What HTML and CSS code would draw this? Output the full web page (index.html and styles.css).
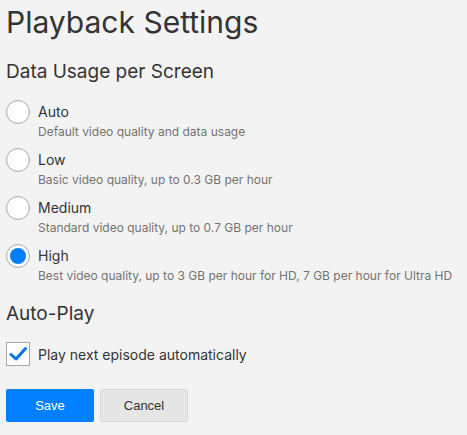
FILE: index.html
```html
<!DOCTYPE html>
<html>
<head>
<meta charset="utf-8">
<link rel="stylesheet" href="styles.css">
</head>
<body>
<div class="page">
  <h1 class="title">Playback Settings</h1>
  <h2 class="section-title">Data Usage per Screen</h2>
  <div class="options">
    <label class="option">
      <span class="radio"></span>
      <span class="option-text">
        <span class="option-label">Auto</span>
        <span class="option-desc">Default video quality and data usage</span>
      </span>
    </label>
    <label class="option">
      <span class="radio"></span>
      <span class="option-text">
        <span class="option-label">Low</span>
        <span class="option-desc">Basic video quality, up to 0.3 GB per hour</span>
      </span>
    </label>
    <label class="option">
      <span class="radio"></span>
      <span class="option-text">
        <span class="option-label">Medium</span>
        <span class="option-desc">Standard video quality, up to 0.7 GB per hour</span>
      </span>
    </label>
    <label class="option">
      <span class="radio checked"></span>
      <span class="option-text">
        <span class="option-label">High</span>
        <span class="option-desc">Best video quality, up to 3 GB per hour for HD, 7 GB per hour for Ultra HD</span>
      </span>
    </label>
  </div>
  <h2 class="section-title autoplay">Auto-Play</h2>
  <label class="check-row">
    <span class="checkbox">
      <svg width="20" height="20" viewBox="0 0 20 20"><path d="M3 10.5 L8 15 L17.5 4.5" fill="none" stroke="#0073e6" stroke-width="3" stroke-linecap="round" stroke-linejoin="round"/></svg>
    </span>
    <span class="check-label">Play next episode automatically</span>
  </label>
  <div class="buttons">
    <button class="btn btn-save">Save</button>
    <button class="btn btn-cancel">Cancel</button>
  </div>
</div>
</body>
</html>
```
FILE: styles.css
```css
html, body {
  margin: 0;
  padding: 0;
  background: #f3f3f3;
}
body {
  font-family: Inter, "Noto Sans", sans-serif;
  color: #333;
}
.page {
  padding: 3px 6px 0 6px;
}
.title {
  margin: 0;
  font-size: 30px;
  font-weight: 400;
  line-height: 38px;
  color: #333;
}
.section-title {
  margin: 19px 0 16px 0;
  font-size: 19px;
  font-weight: 400;
  line-height: 24px;
  color: #333;
}
.options {
  display: flex;
  flex-direction: column;
}
.option {
  display: flex;
  align-items: flex-start;
  height: 48px;
}
.radio {
  box-sizing: border-box;
  width: 24px;
  height: 24px;
  border-radius: 50%;
  border: 1px solid #a6a6a6;
  background: #fff;
  flex: none;
  position: relative;
}
.radio.checked::after {
  content: "";
  position: absolute;
  left: 3px;
  top: 3px;
  width: 16px;
  height: 16px;
  border-radius: 50%;
  background: #0080ff;
}
.option-text {
  display: flex;
  flex-direction: column;
  margin-left: 8px;
}
.option-label {
  font-size: 14px;
  line-height: 24px;
  color: #333;
}
.option-desc {
  font-size: 12px;
  line-height: 16px;
  color: #737373;
}
.section-title.autoplay {
  margin-top: 10px;
  margin-bottom: 16px;
}
.check-row {
  display: flex;
  align-items: center;
  height: 24px;
}
.checkbox {
  box-sizing: border-box;
  width: 24px;
  height: 24px;
  border: 1px solid #a6a6a6;
  background: #fff;
  display: flex;
  align-items: center;
  justify-content: center;
  flex: none;
}
.check-label {
  margin-left: 8px;
  font-size: 14px;
  color: #333;
}
.buttons {
  display: flex;
  gap: 6px;
  margin-top: 23px;
}
.btn {
  width: 88px;
  height: 33px;
  font-family: "Liberation Sans", Arial, sans-serif;
  font-size: 13px;
  border-radius: 2px;
  cursor: pointer;
}
.btn-save {
  background: #0080ff;
  color: #fff;
  border: none;
}
.btn-cancel {
  background: #e6e6e6;
  color: #333;
  border: 1px solid #d9d9d9;
}
```
